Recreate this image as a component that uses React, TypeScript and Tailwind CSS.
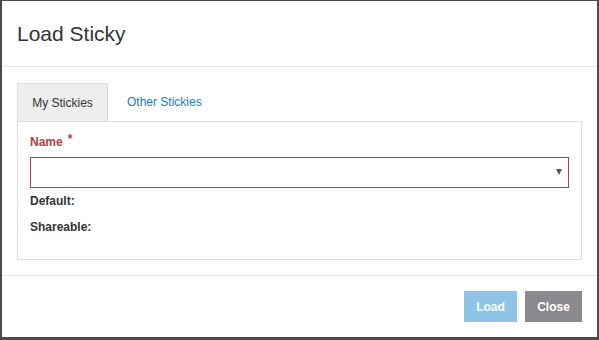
import React from "react";

const App: React.FC = () => {
  return (
    <div className="h-[340px] w-[599px] bg-[#4b4b4b] pl-[2px] pr-[2px] pt-[1px] pb-[3px] font-[family-name:'Liberation_Sans',Arial,sans-serif]">
      <div className="flex h-full w-full flex-col bg-white">
        {/* header */}
        <div className="flex h-[66px] items-center border-b border-[#e5e5e5] px-[15px]">
          <h4 className="text-[21px] leading-none text-[#333]">Load Sticky</h4>
        </div>

        {/* body */}
        <div className="px-[15px] pt-[16px]">
          <div className="flex text-[12px]">
            <div className="flex h-[38px] w-[91px] items-center justify-center border border-b-0 border-[#ddd] bg-[#eeeeee] text-[#333]">
              My Stickies
            </div>
            <div className="flex h-[38px] items-center px-[19px] text-[#1f7ab8]">Other Stickies</div>
          </div>
          <div className="h-[139px] border border-[#ddd] px-[12px] pt-[13px]">
            <div className="flex items-start text-[12px] leading-[14px] font-bold text-[#a94442]">
              Name
              <span className="ml-[5px] -mt-[3px] text-[12px]">*</span>
            </div>
            <div className="relative mt-[8px] h-[31px] border border-[#a94442]">
              <span className="absolute right-[6px] top-[11px] h-0 w-0 border-x-[3.5px] border-t-[6px] border-x-transparent border-t-[#555]" />
            </div>
            <div className="mt-[6px] text-[12px] leading-[14px] font-bold text-[#333]">Default:</div>
            <div className="mt-[12px] text-[12px] leading-[14px] font-bold text-[#333]">Shareable:</div>
          </div>
        </div>

        {/* footer */}
        <div className="mt-[15px] flex flex-1 items-start justify-end gap-[8px] border-t border-[#e5e5e5] px-[15px] pt-[15px]">
          <button className="h-[31px] w-[53px] bg-[#8ec5e6] text-[12px] font-bold text-white">Load</button>
          <button className="h-[31px] w-[57px] bg-[#8a8a8e] text-[12px] font-bold text-white">Close</button>
        </div>
      </div>
    </div>
  );
};

export default App;
